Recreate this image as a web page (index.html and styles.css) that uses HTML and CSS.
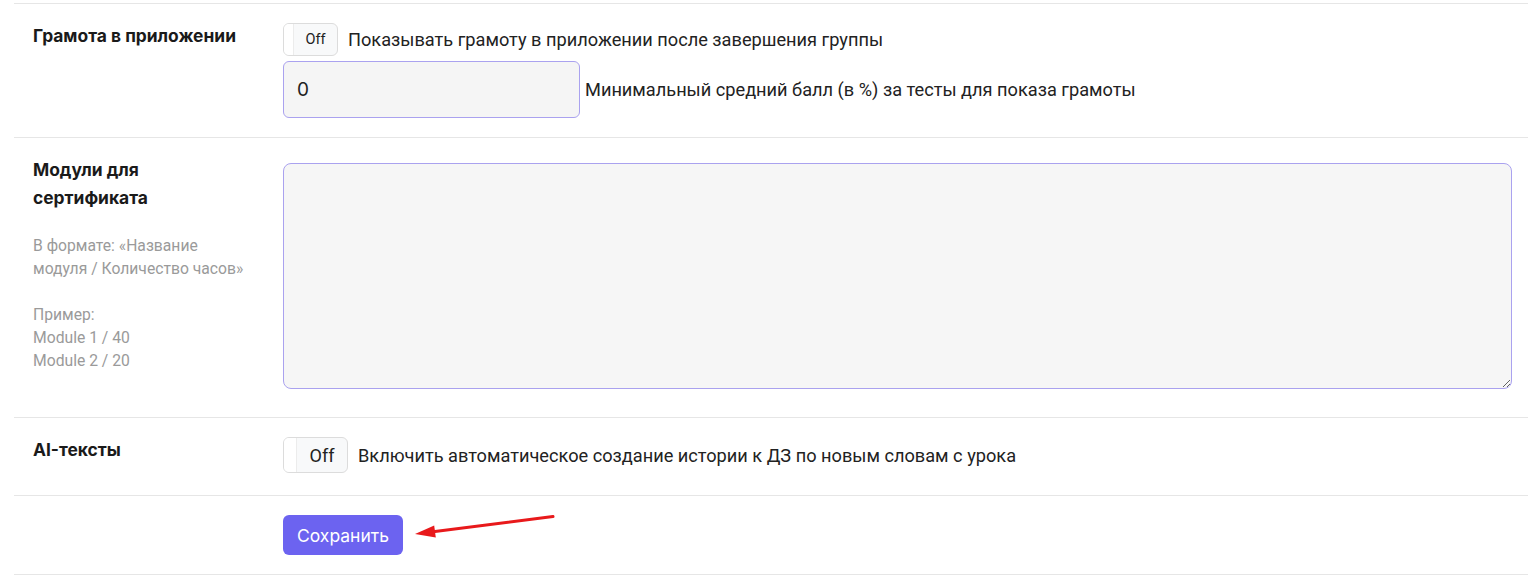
FILE: index.html
```html
<!DOCTYPE html>
<html lang="ru">
<head>
  <meta charset="UTF-8" />
  <meta name="viewport" content="width=device-width, initial-scale=1.0"/>
  <title>Настройки группы</title>
  <link rel="stylesheet" href="styles.css">
</head>
<body>
  <div class="settings">

    <div class="row">
      <div class="label-cell">
        <div class="label">Грамота в приложении</div>
      </div>
      <div class="value-cell">
        <div class="line">
          <span class="toggle"><span class="toggle-handle"></span><span class="toggle-off">Off</span></span>
          <span class="desc">Показывать грамоту в приложении после завершения группы</span>
        </div>
        <div class="line line-input">
          <input type="text" class="field" value="0" />
          <span class="desc">Минимальный средний балл (в %) за тесты для показа грамоты</span>
        </div>
      </div>
    </div>

    <div class="row">
      <div class="label-cell">
        <div class="label">Модули для сертификата</div>
        <div class="hint">
          В формате: «Название модуля / Количество часов»<br><br>
          Пример:<br>
          Module 1 / 40<br>
          Module 2 / 20
        </div>
      </div>
      <div class="value-cell">
        <textarea class="area"></textarea>
      </div>
    </div>

    <div class="row row-ai">
      <div class="label-cell">
        <div class="label">AI-тексты</div>
      </div>
      <div class="value-cell">
        <div class="line">
          <span class="toggle toggle-lg"><span class="toggle-handle"></span><span class="toggle-off">Off</span></span>
          <span class="desc">Включить автоматическое создание истории к ДЗ по новым словам с урока</span>
        </div>
      </div>
    </div>

    <div class="row">
      <div class="label-cell"></div>
      <div class="value-cell">
        <div class="save-wrap">
          <button class="btn-save">Сохранить</button>
          <svg class="arrow" width="145" height="30" viewBox="0 0 145 30">
            <line x1="20" y1="18.8" x2="140" y2="3.5" stroke="#e8191b" stroke-width="3" stroke-linecap="round"/>
            <polygon points="2,21 21.2,12.5 22.8,24.5" fill="#e8191b"/>
          </svg>
        </div>
      </div>
    </div>

  </div>
</body>
</html>
```

FILE: styles.css
```css
* {
  margin: 0;
  padding: 0;
  box-sizing: border-box;
}

body {
  background: #fff;
  color: #212529;
  font-family: Roboto, "Liberation Sans", sans-serif;
  padding: 3px 0 0 14px;
}

.settings {
  border-bottom: 1px solid #e6e6e6;
}

.row {
  display: grid;
  grid-template-columns: 250px 1fr;
  border-top: 1px solid #e6e6e6;
}

.label-cell {
  padding: 18px 19px 19px 19px;
}

.label {
  font-family: Inter, sans-serif;
  font-weight: 700;
  font-size: 17.4px;
  line-height: 28px;
  color: #1a1a1a;
}

.hint {
  margin-top: 22px;
  font-size: 15.7px;
  line-height: 23px;
  color: #9a9a9a;
}

.value-cell {
  padding: 19px 16px 19px 19px;
}

.line {
  display: flex;
  align-items: center;
  gap: 10px;
}

.line-input {
  margin-top: 5px;
  gap: 5px;
}

.desc {
  font-size: 18.2px;
  color: #222;
}

/* toggle, off state */
.toggle {
  display: flex;
  width: 55px;
  height: 33px;
  border: 1px solid #dcdcdc;
  border-radius: 6px;
  overflow: hidden;
  background: #f8f9fa;
}

.toggle-handle {
  width: 10px;
  background: #fff;
  border-right: 1px solid #ececec;
}

.toggle-off {
  flex: 1;
  display: flex;
  align-items: center;
  justify-content: center;
  font-size: 14.5px;
  color: #222;
}

.toggle-lg {
  width: 65px;
  height: 36px;
}

.toggle-lg .toggle-handle {
  width: 13px;
}

.toggle-lg .toggle-off {
  font-size: 18px;
}

.field {
  width: 297px;
  height: 57px;
  padding: 0 13px;
  background: #f5f5f5;
  border: 1px solid #aaa2ef;
  border-radius: 6px;
  font-family: Inter, sans-serif;
  font-size: 19px;
  color: #222;
  outline: none;
}

.area {
  display: block;
  width: 100%;
  height: 226px;
  margin: 6px 0 9px;
  background: #f6f6f6;
  border: 1px solid #aaa2ef;
  border-radius: 8px;
  outline: none;
}

.row-ai .value-cell {
  padding-bottom: 22px;
}

.save-wrap {
  position: relative;
  width: 120px;
}

.btn-save {
  width: 120px;
  height: 40px;
  border: none;
  border-radius: 6px;
  background: #6c63f0;
  color: #fff;
  font-family: Inter, sans-serif;
  font-size: 17.5px;
  cursor: pointer;
}

.arrow {
  position: absolute;
  left: 130px;
  top: -2px;
}
```
